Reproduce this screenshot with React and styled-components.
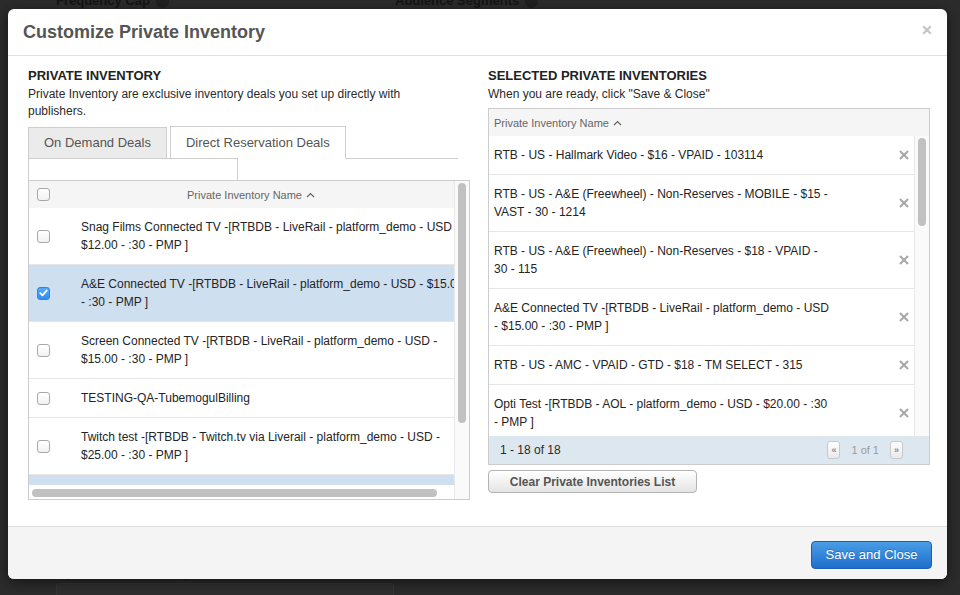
import React from "react";
import styled, { createGlobalStyle } from "styled-components";

const FONT = `"Liberation Sans", Arial, Helvetica, sans-serif`;

const GlobalStyle = createGlobalStyle`
  html, body { margin: 0; padding: 0; width: 960px; height: 595px; overflow: hidden; background: #2c2c2c; }
  body { font-family: ${FONT}; }
  * { box-sizing: border-box; }
`;

const Page = styled.div`
  position: relative;
  width: 960px;
  height: 595px;
  overflow: hidden;
  background: #2c2c2c;
  display: flex;
  flex-direction: column;
  justify-content: space-between;
`;

const BgTopRow = styled.div`
  display: flex;
  padding-left: 56px;
  margin-top: -8px;
  height: 18px;
  align-items: center;
`;

const BgLabel = styled.div`
  width: ${(p) => p.$w}px;
  display: flex;
  align-items: center;
  gap: 6px;
  font: bold 13px/16px ${FONT};
  color: #141414;
`;

const BgInfo = styled.span`
  width: 13px;
  height: 13px;
  border-radius: 50%;
  background: #202020;
  display: inline-block;
`;

const BgBottom = styled.div`
  padding-left: 56px;
  display: flex;
  flex-direction: column;
  gap: 2px;
`;

const BgField = styled.div`
  width: 338px;
  height: 12px;
  background: #303030;
  border: 1px solid #363636;
  border-bottom: none;
  border-radius: 3px 3px 0 0;
`;

const Modal = styled.div`
  position: absolute;
  top: 9px;
  left: 8px;
  width: 939px;
  height: 570px;
  background: #fff;
  border-radius: 6px;
  box-shadow: 0 3px 14px rgba(0, 0, 0, 0.55);
  display: flex;
  flex-direction: column;
  overflow: hidden;
`;

const ModalHeader = styled.div`
  height: 47px;
  flex: none;
  border-bottom: 1px solid #e2e2e2;
  display: flex;
  justify-content: space-between;
  align-items: flex-start;
  padding: 12px 15px 0 15px;
`;

const Title = styled.h3`
  margin: 0;
  font: bold 18px/22px ${FONT};
  color: #555;
`;

const CloseButton = styled.button`
  border: 0;
  background: none;
  padding: 0;
  margin-top: 4px;
  width: 10px;
  height: 10px;
  display: flex;
  cursor: pointer;
`;

const ModalBody = styled.div`
  height: 470px;
  flex: none;
  display: grid;
  grid-template-columns: 442px 442px;
  column-gap: 18px;
  padding: 12px 17px 0 20px;
`;

const Column = styled.div`
  display: flex;
  flex-direction: column;
  align-items: flex-start;
  min-width: 0;
`;

const SectionTitle = styled.h4`
  margin: 0;
  font: bold 13px/16px ${FONT};
  color: #222;
`;

const Desc = styled.p`
  margin: 2px 0 0 0;
  max-width: ${(p) => p.$max}px;
  font: 12px/17px ${FONT};
  color: #2a2a2a;
`;

const TabBar = styled.div`
  margin-top: 6px;
  width: 430px;
  height: 33px;
  display: flex;
  align-items: flex-end;
  gap: 3px;
  border-bottom: 1px solid #cfcfcf;
`;

const Tab = styled.div`
  height: ${(p) => (p.$active ? 33 : 31)}px;
  margin-bottom: ${(p) => (p.$active ? -1 : 0)}px;
  padding: 0 15px;
  display: flex;
  align-items: center;
  border: 1px solid #cfcfcf;
  border-bottom: ${(p) => (p.$active ? "1px solid #fff" : "none")};
  background: ${(p) => (p.$active ? "#fff" : "#ebebeb")};
  font: 13px/16px ${FONT};
  color: #555;
`;

const SearchInput = styled.input`
  margin-top: -1px;
  width: 210px;
  height: 22px;
  border: 1px solid #cfcfcf;
  border-bottom: none;
  outline: none;
  padding: 0 4px;
  font: 12px ${FONT};
`;

const Grid = styled.div`
  width: 442px;
  margin-top: ${(p) => p.$mt || 0}px;
  border: 1px solid #cccccc;
  background: #fff;
  display: flex;
  flex-direction: ${(p) => (p.$col ? "column" : "row")};
`;

const GridMain = styled.div`
  flex: 1;
  min-width: 0;
  display: flex;
  flex-direction: column;
  overflow: hidden;
`;

const HeaderRow = styled.div`
  height: 27px;
  flex: none;
  background: #f5f5f5;
  display: flex;
  align-items: center;
  padding-left: ${(p) => p.$pl || 0}px;
  font: 11px/14px ${FONT};
  color: #666;
`;

const CheckCell = styled.div`
  width: 52px;
  flex: none;
  padding-left: 8px;
  display: flex;
  align-items: center;
`;

const HeadName = styled.div`
  flex: 1;
  display: flex;
  justify-content: center;
  align-items: center;
  padding-right: 33px;
`;

const SortIcon = styled.svg`
  margin-left: 4px;
  flex: none;
`;

const RowsViewport = styled.div`
  height: ${(p) => p.$h}px;
  overflow: hidden;
  flex: ${(p) => (p.$grow ? 1 : "none")};
`;

const LeftRow = styled.div`
  display: flex;
  align-items: center;
  min-height: ${(p) => (p.$blank ? 57 : 0)}px;
  padding: 10px 0;
  border-bottom: 1px solid #e6e6e6;
  background: ${(p) => (p.$selected ? "#cedff0" : "#fff")};
`;

const NameCell = styled.div`
  flex: none;
  white-space: nowrap;
  font: 12px/18px ${FONT};
  color: #242424;
`;

const Line = styled.span`
  display: block;
`;

const CheckBox = styled.span`
  width: 13px;
  height: 13px;
  border-radius: 3px;
  border: 1px solid ${(p) => (p.$checked ? "#2c86e6" : "#a8a8a8")};
  background: ${(p) =>
    p.$checked ? "linear-gradient(#55a9fb, #2f8ef0)" : "linear-gradient(#ffffff, #f1f1f1)"};
  display: flex;
  align-items: center;
  justify-content: center;
`;

const HTrack = styled.div`
  height: 14px;
  flex: none;
  background: #fff;
  padding: 4px 0 0 3px;
`;

const HThumb = styled.div`
  width: 405px;
  height: 8px;
  border-radius: 4px;
  background: #c1c1c1;
`;

const VTrack = styled.div`
  width: 15px;
  flex: none;
  background: #fafafa;
  border-left: 1px solid #e8e8e8;
  padding: 2px 0 0 3px;
`;

const VThumb = styled.div`
  width: 8px;
  height: ${(p) => p.$h}px;
  border-radius: 4px;
  background: #c1c1c1;
`;

const RBody = styled.div`
  height: 300px;
  display: flex;
`;

const RightRow = styled.div`
  display: flex;
  align-items: center;
  justify-content: space-between;
  padding: 10px 5px 10px 5px;
  border-bottom: 1px solid #e6e6e6;
`;

const RemoveIcon = styled.svg`
  flex: none;
  cursor: pointer;
`;

const GridFooter = styled.div`
  height: 28px;
  background: #dde7f0;
  display: flex;
  align-items: center;
  justify-content: space-between;
  padding: 0 26px 0 11px;
  font: 12px/16px ${FONT};
  color: #2a2a2a;
`;

const Pager = styled.div`
  display: flex;
  align-items: center;
  gap: 11px;
`;

const PagerButton = styled.span`
  width: 13px;
  height: 18px;
  border: 1px solid #c9c9c9;
  border-radius: 3px;
  background: linear-gradient(#ffffff, #e9e9e9);
  display: flex;
  align-items: center;
  justify-content: center;
  font: bold 9px/9px ${FONT};
  color: #8a8a8a;
`;

const PageText = styled.span`
  font: 11px/14px ${FONT};
  color: #9a9a9a;
`;

const ClearButton = styled.button`
  margin-top: 5px;
  width: 209px;
  height: 23px;
  border: 1px solid #b3b3b3;
  border-radius: 4px;
  background: linear-gradient(#ffffff, #e4e4e4);
  font: bold 12px/14px ${FONT};
  color: #555;
  padding: 0;
`;

const ModalFooter = styled.div`
  flex: 1;
  border-top: 1px solid #dcdcdc;
  background: #f4f4f4;
  display: flex;
  justify-content: flex-end;
  align-items: flex-start;
  padding: 14px 15px 0 0;
`;

const SaveButton = styled.button`
  width: 121px;
  height: 28px;
  border: 1px solid #1b5fae;
  border-radius: 4px;
  background: linear-gradient(#4a9de6, #1d6fcb);
  color: #fff;
  font: 13px/16px ${FONT};
  text-shadow: 0 -1px 0 rgba(0, 0, 0, 0.2);
  padding: 0;
`;

const leftRows = [
  { lines: ["Snag Films Connected TV -[RTBDB - LiveRail - platform_demo - USD -", "$12.00 - :30 - PMP ]"] },
  { lines: ["A&E Connected TV -[RTBDB - LiveRail - platform_demo - USD - $15.00", "- :30 - PMP ]"], checked: true },
  { lines: ["Screen Connected TV -[RTBDB - LiveRail - platform_demo - USD -", "$15.00 - :30 - PMP ]"] },
  { lines: ["TESTING-QA-TubemogulBilling"] },
  { lines: ["Twitch test -[RTBDB - Twitch.tv via Liverail - platform_demo - USD -", "$25.00 - :30 - PMP ]"] },
];

const rightRows = [
  ["RTB - US - Hallmark Video - $16 - VPAID - 103114"],
  ["RTB - US - A&E (Freewheel) - Non-Reserves - MOBILE - $15 -", "VAST - 30 - 1214"],
  ["RTB - US - A&E (Freewheel) - Non-Reserves - $18 - VPAID -", "30 - 115"],
  ["A&E Connected TV -[RTBDB - LiveRail - platform_demo - USD", "- $15.00 - :30 - PMP ]"],
  ["RTB - US - AMC - VPAID - GTD - $18 - TM SELECT - 315"],
  ["Opti Test -[RTBDB - AOL - platform_demo - USD - $20.00 - :30", "- PMP ]"],
];

function Check({ checked }) {
  return (
    <CheckBox $checked={checked}>
      {checked && (
        <svg width="9" height="8" viewBox="0 0 9 8">
          <polyline points="1.3,4.2 3.5,6.3 7.7,1.5" fill="none" stroke="#fff" strokeWidth="1.8" strokeLinecap="round" strokeLinejoin="round" />
        </svg>
      )}
    </CheckBox>
  );
}

function Sort() {
  return (
    <SortIcon width="9" height="6" viewBox="0 0 9 6">
      <polyline points="1,5 4.5,1.5 8,5" fill="none" stroke="#666" strokeWidth="1.2" />
    </SortIcon>
  );
}

function Lines({ lines }) {
  return (
    <NameCell>
      {lines.map((l, i) => (
        <Line key={i}>{l}</Line>
      ))}
    </NameCell>
  );
}

export default function App() {
  return (
    <>
      <GlobalStyle />
      <Page>
        <BgTopRow>
          <BgLabel $w={339}>
            Frequency Cap <BgInfo />
          </BgLabel>
          <BgLabel $w={200}>
            Audience Segments <BgInfo />
          </BgLabel>
        </BgTopRow>
        <BgBottom>
          <BgLabel $w={200}>
            Optimization Goals <BgInfo />
          </BgLabel>
          <BgField />
        </BgBottom>

        <Modal>
          <ModalHeader>
            <Title>Customize Private Inventory</Title>
            <CloseButton aria-label="Close">
              <svg width="10" height="10" viewBox="0 0 10 10">
                <path d="M1.2 1.2 L8.8 8.8 M8.8 1.2 L1.2 8.8" stroke="#c6c6c6" strokeWidth="2.3" />
              </svg>
            </CloseButton>
          </ModalHeader>

          <ModalBody>
            <Column>
              <SectionTitle>PRIVATE INVENTORY</SectionTitle>
              <Desc $max={430}>
                Private Inventory are exclusive inventory deals you set up directly with publishers.
              </Desc>
              <TabBar>
                <Tab>On Demand Deals</Tab>
                <Tab $active>Direct Reservation Deals</Tab>
              </TabBar>
              <SearchInput />
              <Grid>
                <GridMain>
                  <HeaderRow>
                    <CheckCell>
                      <Check />
                    </CheckCell>
                    <HeadName>
                      Private Inventory Name
                      <Sort />
                    </HeadName>
                  </HeaderRow>
                  <RowsViewport $h={277}>
                    {leftRows.map((r, i) => (
                      <LeftRow key={i} $selected={r.checked}>
                        <CheckCell>
                          <Check checked={r.checked} />
                        </CheckCell>
                        <Lines lines={r.lines} />
                      </LeftRow>
                    ))}
                    <LeftRow $selected $blank />
                  </RowsViewport>
                  <HTrack>
                    <HThumb />
                  </HTrack>
                </GridMain>
                <VTrack>
                  <VThumb $h={240} />
                </VTrack>
              </Grid>
            </Column>

            <Column>
              <SectionTitle>SELECTED PRIVATE INVENTORIES</SectionTitle>
              <Desc $max={442}>When you are ready, click "Save &amp; Close"</Desc>
              <Grid $col $mt={5}>
                <HeaderRow $pl={5}>
                  Private Inventory Name
                  <Sort />
                </HeaderRow>
                <RBody>
                  <RowsViewport $grow $h={300}>
                    {rightRows.map((lines, i) => (
                      <RightRow key={i}>
                        <Lines lines={lines} />
                        <RemoveIcon width="10" height="10" viewBox="0 0 10 10">
                          <path d="M1 1 L9 9 M9 1 L1 9" stroke="#a6a6a6" strokeWidth="2" />
                        </RemoveIcon>
                      </RightRow>
                    ))}
                  </RowsViewport>
                  <VTrack>
                    <VThumb $h={88} />
                  </VTrack>
                </RBody>
                <GridFooter>
                  <span>1 - 18 of 18</span>
                  <Pager>
                    <PagerButton>«</PagerButton>
                    <PageText>1 of 1</PageText>
                    <PagerButton>»</PagerButton>
                  </Pager>
                </GridFooter>
              </Grid>
              <ClearButton>Clear Private Inventories List</ClearButton>
            </Column>
          </ModalBody>

          <ModalFooter>
            <SaveButton>Save and Close</SaveButton>
          </ModalFooter>
        </Modal>
      </Page>
    </>
  );
}
